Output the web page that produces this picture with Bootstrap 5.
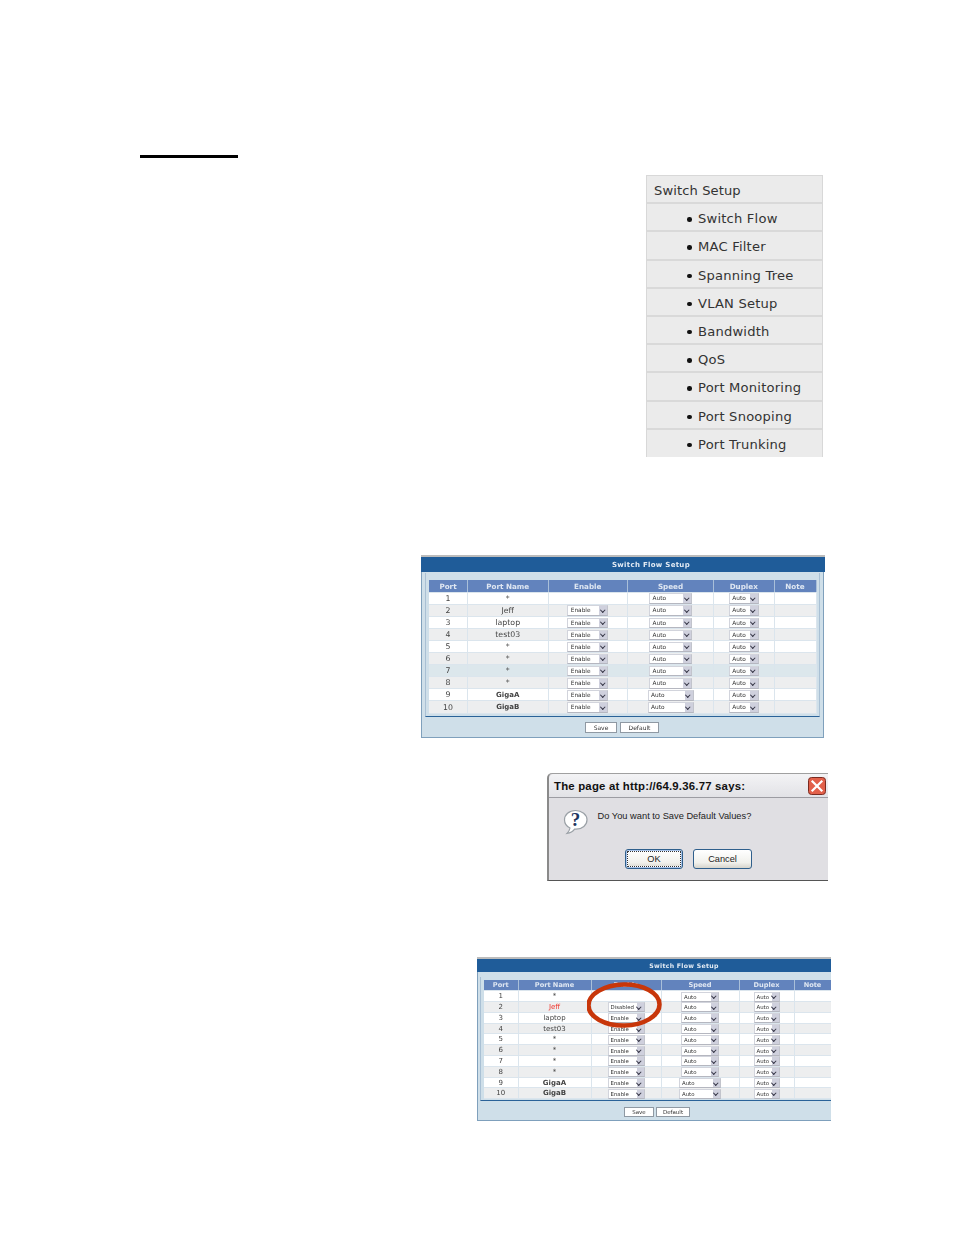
<!DOCTYPE html>
<html lang="en">
<head>
<meta charset="utf-8">
<title>Switch Flow Setup</title>
<link href="https://cdn.jsdelivr.net/npm/bootstrap@5.3.0/dist/css/bootstrap.min.css" rel="stylesheet">
<style>
body{background:#fff;margin:0;font-family:"DejaVu Sans",sans-serif;color:#222}
.sheet{padding-top:155px;width:954px;height:1235px;overflow:hidden}
.rule-top{width:98px;height:3px;background:#000;margin-left:140px}

.menu-box{width:177px;height:282px;margin:17px 0 0 646px;overflow:hidden;border:solid #d8d8d8;border-width:1px 1px 0 1px;border-radius:0}
.menu-box .list-group-item{height:28.2px;background:#ebebeb;color:#333;border:0;border-bottom:2px solid #d9d9d9;border-radius:0;font-size:13.1px;line-height:25px;padding:2px 0 0 7px;letter-spacing:.1px;flex:none}
.menu-box .list-group-item:last-child{border-bottom:0}
.menu-box .menu-sub{padding-left:51px;position:relative;letter-spacing:.2px}
.menu-sub::before{content:"";position:absolute;left:40px;top:13px;width:4.500px;height:4.500px;border-radius:50%;background:#111}

.shot{filter:blur(.35px)}
.shot-a{width:404px;margin:98px 0 0 421px}
.shot-b{width:354px;margin:76px 0 0 477px;overflow:hidden}
.topline{height:2px;background:#bcbcbc}
.title-bar{background:#1f5c99;color:#e3ebf4;font-weight:700;text-align:center;font-size:7px;letter-spacing:.3px}
.shot-a .title-bar{height:15px;line-height:17px;padding-left:56px;overflow:hidden}
.shot-b .title-bar{height:13px;line-height:14px;width:414px;font-size:6.200px;overflow:hidden}
.panel-box{background:#cfdfe9;border:1px solid #7fa0bc;border-top:0}
.shot-a .panel-box{height:166px;width:403px;padding:1px 4px 0 3px}
.shot-b .panel-box{height:149px;border-right:0;padding:5px 0 0 2px}
.frame-box{border:1px solid #a9c0d4;border-bottom:1px solid #2a6298;border-top:0}
.shot-a .frame-box{width:394.5px;height:144px;padding:7px 3px 0 3px}
.shot-b .frame-box{width:400px;height:124px;padding:3px 3px 0 3px}

.flow-tbl{table-layout:fixed;margin:0;font-size:7px;--bs-table-bg:#fff;border-collapse:collapse}
.shot-a .flow-tbl{width:387px;font-size:7.800px}
.shot-b .flow-tbl{width:347px}
.flow-tbl>*>tr>*{padding:1px 0 0;border:0;border-right:1px solid #dbe5ed;border-bottom:1px solid #dbe5ed;text-align:center;vertical-align:middle;line-height:1;color:#444;background:#fff;box-shadow:none;white-space:nowrap}
.flow-tbl>thead>tr>th{background:#6283bd;color:#dfe7f2;font-weight:700;border-right:1px solid #a9bfd9;font-size:7.2px}
.shot-b .flow-tbl>thead>tr>th{font-size:6.600px}
.flow-tbl>tbody>tr>td.fw-bold{font-size:7px}
.shot-a .flow-tbl tr{height:12.1px}
.shot-b .flow-tbl tr{height:10.8px}
.flow-tbl>tbody>tr.row-alt>*{background:#edeeef}
.flow-tbl>tbody>tr.row-hi>*{background:#dce7ec}
.shot-a .w1{width:38.5px}.shot-a .w2{width:80.5px}.shot-a .w3{width:79.5px}.shot-a .w4{width:86px}.shot-a .w5{width:60.5px}.shot-a .w6{width:42px}
.shot-b .w1{width:34px}.shot-b .w2{width:73px}.shot-b .w3{width:70px}.shot-b .w4{width:78px}.shot-b .w5{width:55px}.shot-b .w6{width:37px}
.flow-tbl>tbody>tr>td.red-name{color:#f0342c}

.pick{display:inline-block;position:relative;height:10.5px;margin:-1px 0 -1px;line-height:9.5px;background:#fff;border:1px solid #d2d4dc;border-right-color:#c2c4cc;border-bottom-color:#b5b7c0;text-align:left;padding-left:2.500px;font-size:5.800px;color:#333;vertical-align:middle}
.pick::after{content:"";position:absolute;right:0;top:0;bottom:0;width:9px;background:#cfd0dd;border-left:1px solid #fff}
.pick::before{content:"";position:absolute;right:3px;top:1.500px;width:3.5px;height:3.5px;border:solid #334;border-width:0 1.2px 1.2px 0;transform:rotate(45deg);z-index:1}
.shot-a .pick-en{width:41px}.shot-a .pick-sp{width:43px}.shot-a .pick-du{width:30px}.shot-a .pick-wd{width:46px}
.shot-b .pick-en{width:37px}.shot-b .pick-sp{width:38px}.shot-b .pick-du{width:26px}.shot-b .pick-wd{width:42px}
.shot-b .pick{height:10px;line-height:8.5px;font-size:5.400px;padding-left:2px}
.shot-b .pick::after{width:8px}

.mini-btn{--bs-btn-padding-x:0;--bs-btn-padding-y:0;--bs-btn-font-size:6px;--bs-btn-border-radius:0;--bs-btn-border-color:#8f99a3;--bs-btn-bg:#fff;--bs-btn-color:#333;height:11px;line-height:9px}
.btn-row-a{margin-top:5px;gap:3px}
.btn-row-b{margin-top:6px;gap:2px;padding-left:144px}
.shot-a .mb1{width:32px}.shot-a .mb2{width:39px}
.shot-b .mb1{width:30px}.shot-b .mb2{width:34px}
.shot-b .mini-btn{height:10px;line-height:8px;font-size:5.500px}

.ring-wrap{position:relative;width:354px;margin:0}
.ring-svg{position:absolute;left:103px;top:0;width:90px;height:50px;pointer-events:none}

.dlg-box{width:281px;height:108px;margin:35px 0 0 547px;background:#e0dfe3;border-left:2px solid #8a8a8a;border-bottom:1px solid #555;border-top:1px solid #a0a0a0;border-radius:5px 0 0 0}
.dlg-head{height:24px;background:linear-gradient(#f3f3f5,#e2e2e6);border-bottom:1px solid #9c9ca2;padding:0 2px 0 5px;border-radius:5px 0 0 0}
.dlg-title{font-family:"Liberation Sans",sans-serif;font-weight:700;font-size:11.400px;color:#111;margin:0;line-height:30px;letter-spacing:.2px}
.dlg-x{display:block;width:18px;height:18px;margin-top:1px}
.dlg-body{padding:11px 0 0 14px;gap:9.500px;height:51px}
.dlg-ico{width:25px;height:26px;flex:none}
.dlg-msg{font-family:"Liberation Sans",sans-serif;font-size:9.300px;color:#222;margin:1px 0 0 0}
.dlg-foot{padding-left:76px;gap:10px}
.dlg-btn{--bs-btn-padding-x:0;--bs-btn-padding-y:0;--bs-btn-font-size:9.200px;--bs-btn-border-radius:3px;--bs-btn-color:#222;--bs-btn-border-color:#2f5f8c;height:20px;line-height:18px;font-family:"Liberation Sans",sans-serif;background:linear-gradient(#fff,#f1f1ec 70%,#d6d4cc)}
.dlg-ok{width:58px;box-shadow:inset 0 0 0 1px #a9c4ea,inset 0 0 0 2px #fff;outline:1px dotted #333;outline-offset:-3px}
.dlg-cancel{width:59px}
</style>
</head>
<body>
<main class="sheet">
  <div class="rule-top"></div>

  <div class="list-group menu-box">
    <a class="list-group-item">Switch Setup</a>
    <a class="list-group-item menu-sub">Switch Flow</a>
    <a class="list-group-item menu-sub">MAC Filter</a>
    <a class="list-group-item menu-sub">Spanning Tree</a>
    <a class="list-group-item menu-sub">VLAN Setup</a>
    <a class="list-group-item menu-sub">Bandwidth</a>
    <a class="list-group-item menu-sub">QoS</a>
    <a class="list-group-item menu-sub">Port Monitoring</a>
    <a class="list-group-item menu-sub">Port Snooping</a>
    <a class="list-group-item menu-sub">Port Trunking</a>
  </div>

  <section class="shot shot-a">
    <div class="topline"></div>
    <div class="title-bar">Switch Flow Setup</div>
    <div class="panel-box">
      <div class="frame-box">
        <table class="table flow-tbl">
          <thead><tr><th class="w1">Port</th><th class="w2">Port Name</th><th class="w3">Enable</th><th class="w4">Speed</th><th class="w5">Duplex</th><th class="w6">Note</th></tr></thead>
          <tbody>
            <tr><td>1</td><td>*</td><td></td><td><span class="pick pick-sp">Auto</span></td><td><span class="pick pick-du">Auto</span></td><td></td></tr>
            <tr class="row-alt"><td>2</td><td>Jeff</td><td><span class="pick pick-en">Enable</span></td><td><span class="pick pick-sp">Auto</span></td><td><span class="pick pick-du">Auto</span></td><td></td></tr>
            <tr><td>3</td><td>laptop</td><td><span class="pick pick-en">Enable</span></td><td><span class="pick pick-sp">Auto</span></td><td><span class="pick pick-du">Auto</span></td><td></td></tr>
            <tr class="row-alt"><td>4</td><td>test03</td><td><span class="pick pick-en">Enable</span></td><td><span class="pick pick-sp">Auto</span></td><td><span class="pick pick-du">Auto</span></td><td></td></tr>
            <tr><td>5</td><td>*</td><td><span class="pick pick-en">Enable</span></td><td><span class="pick pick-sp">Auto</span></td><td><span class="pick pick-du">Auto</span></td><td></td></tr>
            <tr class="row-alt"><td>6</td><td>*</td><td><span class="pick pick-en">Enable</span></td><td><span class="pick pick-sp">Auto</span></td><td><span class="pick pick-du">Auto</span></td><td></td></tr>
            <tr class="row-hi"><td>7</td><td>*</td><td><span class="pick pick-en">Enable</span></td><td><span class="pick pick-sp">Auto</span></td><td><span class="pick pick-du">Auto</span></td><td></td></tr>
            <tr class="row-alt"><td>8</td><td>*</td><td><span class="pick pick-en">Enable</span></td><td><span class="pick pick-sp">Auto</span></td><td><span class="pick pick-du">Auto</span></td><td></td></tr>
            <tr><td>9</td><td class="fw-bold">GigaA</td><td><span class="pick pick-en">Enable</span></td><td><span class="pick pick-wd">Auto</span></td><td><span class="pick pick-du">Auto</span></td><td></td></tr>
            <tr class="row-alt"><td>10</td><td class="fw-bold">GigaB</td><td><span class="pick pick-en">Enable</span></td><td><span class="pick pick-wd">Auto</span></td><td><span class="pick pick-du">Auto</span></td><td></td></tr>
          </tbody>
        </table>
      </div>
      <div class="d-flex justify-content-center btn-row-a">
        <button type="button" class="btn mini-btn mb1">Save</button>
        <button type="button" class="btn mini-btn mb2">Default</button>
      </div>
    </div>
  </section>

  <section class="dlg-box">
    <div class="dlg-head d-flex align-items-center justify-content-between">
      <p class="dlg-title">The page at http://64.9.36.77 says:</p>
      <svg class="dlg-x" viewBox="0 0 18 18"><rect x=".5" y=".5" width="17" height="17" rx="3" fill="#e2604a" stroke="#7a2a20"/><path d="M4.5 4.5l9 9M13.500 4.500l-9 9" stroke="#fff" stroke-width="2.200" stroke-linecap="square"/></svg>
    </div>
    <div class="dlg-body d-flex">
      <svg class="dlg-ico" viewBox="0 0 25 26"><path d="M12.500 1.500C6 1.500 1.500 5.700 1.500 10.800c0 3.800 2.300 6.700 5.500 8.200-.4 2-1.500 4-3 5.500 3.300-.4 6-2 7.600-4.300h1.400c6.300 0 11-4.200 11-9.400S18.900 1.500 12.500 1.500z" fill="#fff" stroke="#9aa0a6" stroke-width="1.200"/><text x="12.500" y="17" text-anchor="middle" font-family="Liberation Serif, serif" font-weight="700" font-size="19" fill="#1d3560">?</text></svg>
      <p class="dlg-msg">Do You want to Save Default Values?</p>
    </div>
    <div class="dlg-foot d-flex">
      <button type="button" class="btn dlg-btn dlg-ok">OK</button>
      <button type="button" class="btn dlg-btn dlg-cancel">Cancel</button>
    </div>
  </section>

  <section class="shot shot-b">
    <div class="topline"></div>
    <div class="title-bar">Switch Flow Setup</div>
    <div class="panel-box">
      <div class="frame-box">
        <div class="ring-wrap">
        <table class="table flow-tbl">
          <thead><tr><th class="w1">Port</th><th class="w2">Port Name</th><th class="w3">Enable</th><th class="w4">Speed</th><th class="w5">Duplex</th><th class="w6">Note</th></tr></thead>
          <tbody>
            <tr><td>1</td><td>*</td><td></td><td><span class="pick pick-sp">Auto</span></td><td><span class="pick pick-du">Auto</span></td><td></td></tr>
            <tr class="row-alt"><td>2</td><td class="red-name">Jeff</td><td><span class="pick pick-en">Disabled</span></td><td><span class="pick pick-sp">Auto</span></td><td><span class="pick pick-du">Auto</span></td><td></td></tr>
            <tr><td>3</td><td>laptop</td><td><span class="pick pick-en">Enable</span></td><td><span class="pick pick-sp">Auto</span></td><td><span class="pick pick-du">Auto</span></td><td></td></tr>
            <tr class="row-alt"><td>4</td><td>test03</td><td><span class="pick pick-en">Enable</span></td><td><span class="pick pick-sp">Auto</span></td><td><span class="pick pick-du">Auto</span></td><td></td></tr>
            <tr><td>5</td><td>*</td><td><span class="pick pick-en">Enable</span></td><td><span class="pick pick-sp">Auto</span></td><td><span class="pick pick-du">Auto</span></td><td></td></tr>
            <tr class="row-alt"><td>6</td><td>*</td><td><span class="pick pick-en">Enable</span></td><td><span class="pick pick-sp">Auto</span></td><td><span class="pick pick-du">Auto</span></td><td></td></tr>
            <tr><td>7</td><td>*</td><td><span class="pick pick-en">Enable</span></td><td><span class="pick pick-sp">Auto</span></td><td><span class="pick pick-du">Auto</span></td><td></td></tr>
            <tr class="row-alt"><td>8</td><td>*</td><td><span class="pick pick-en">Enable</span></td><td><span class="pick pick-sp">Auto</span></td><td><span class="pick pick-du">Auto</span></td><td></td></tr>
            <tr><td>9</td><td class="fw-bold">GigaA</td><td><span class="pick pick-en">Enable</span></td><td><span class="pick pick-wd">Auto</span></td><td><span class="pick pick-du">Auto</span></td><td></td></tr>
            <tr class="row-alt"><td>10</td><td class="fw-bold">GigaB</td><td><span class="pick pick-en">Enable</span></td><td><span class="pick pick-wd">Auto</span></td><td><span class="pick pick-du">Auto</span></td><td></td></tr>
          </tbody>
        </table>
        <svg class="ring-svg" viewBox="0 0 90 50"><ellipse cx="37" cy="25" rx="35.500" ry="20.500" fill="none" stroke="#c8360a" stroke-width="4.500" transform="rotate(-1 37 25)"/></svg>
        </div>
      </div>
      <div class="d-flex btn-row-b">
        <button type="button" class="btn mini-btn mb1">Save</button>
        <button type="button" class="btn mini-btn mb2">Default</button>
      </div>
    </div>
  </section>
</main>
<script src="https://cdn.jsdelivr.net/npm/bootstrap@5.3.0/dist/js/bootstrap.bundle.min.js"></script>
</body>
</html>
